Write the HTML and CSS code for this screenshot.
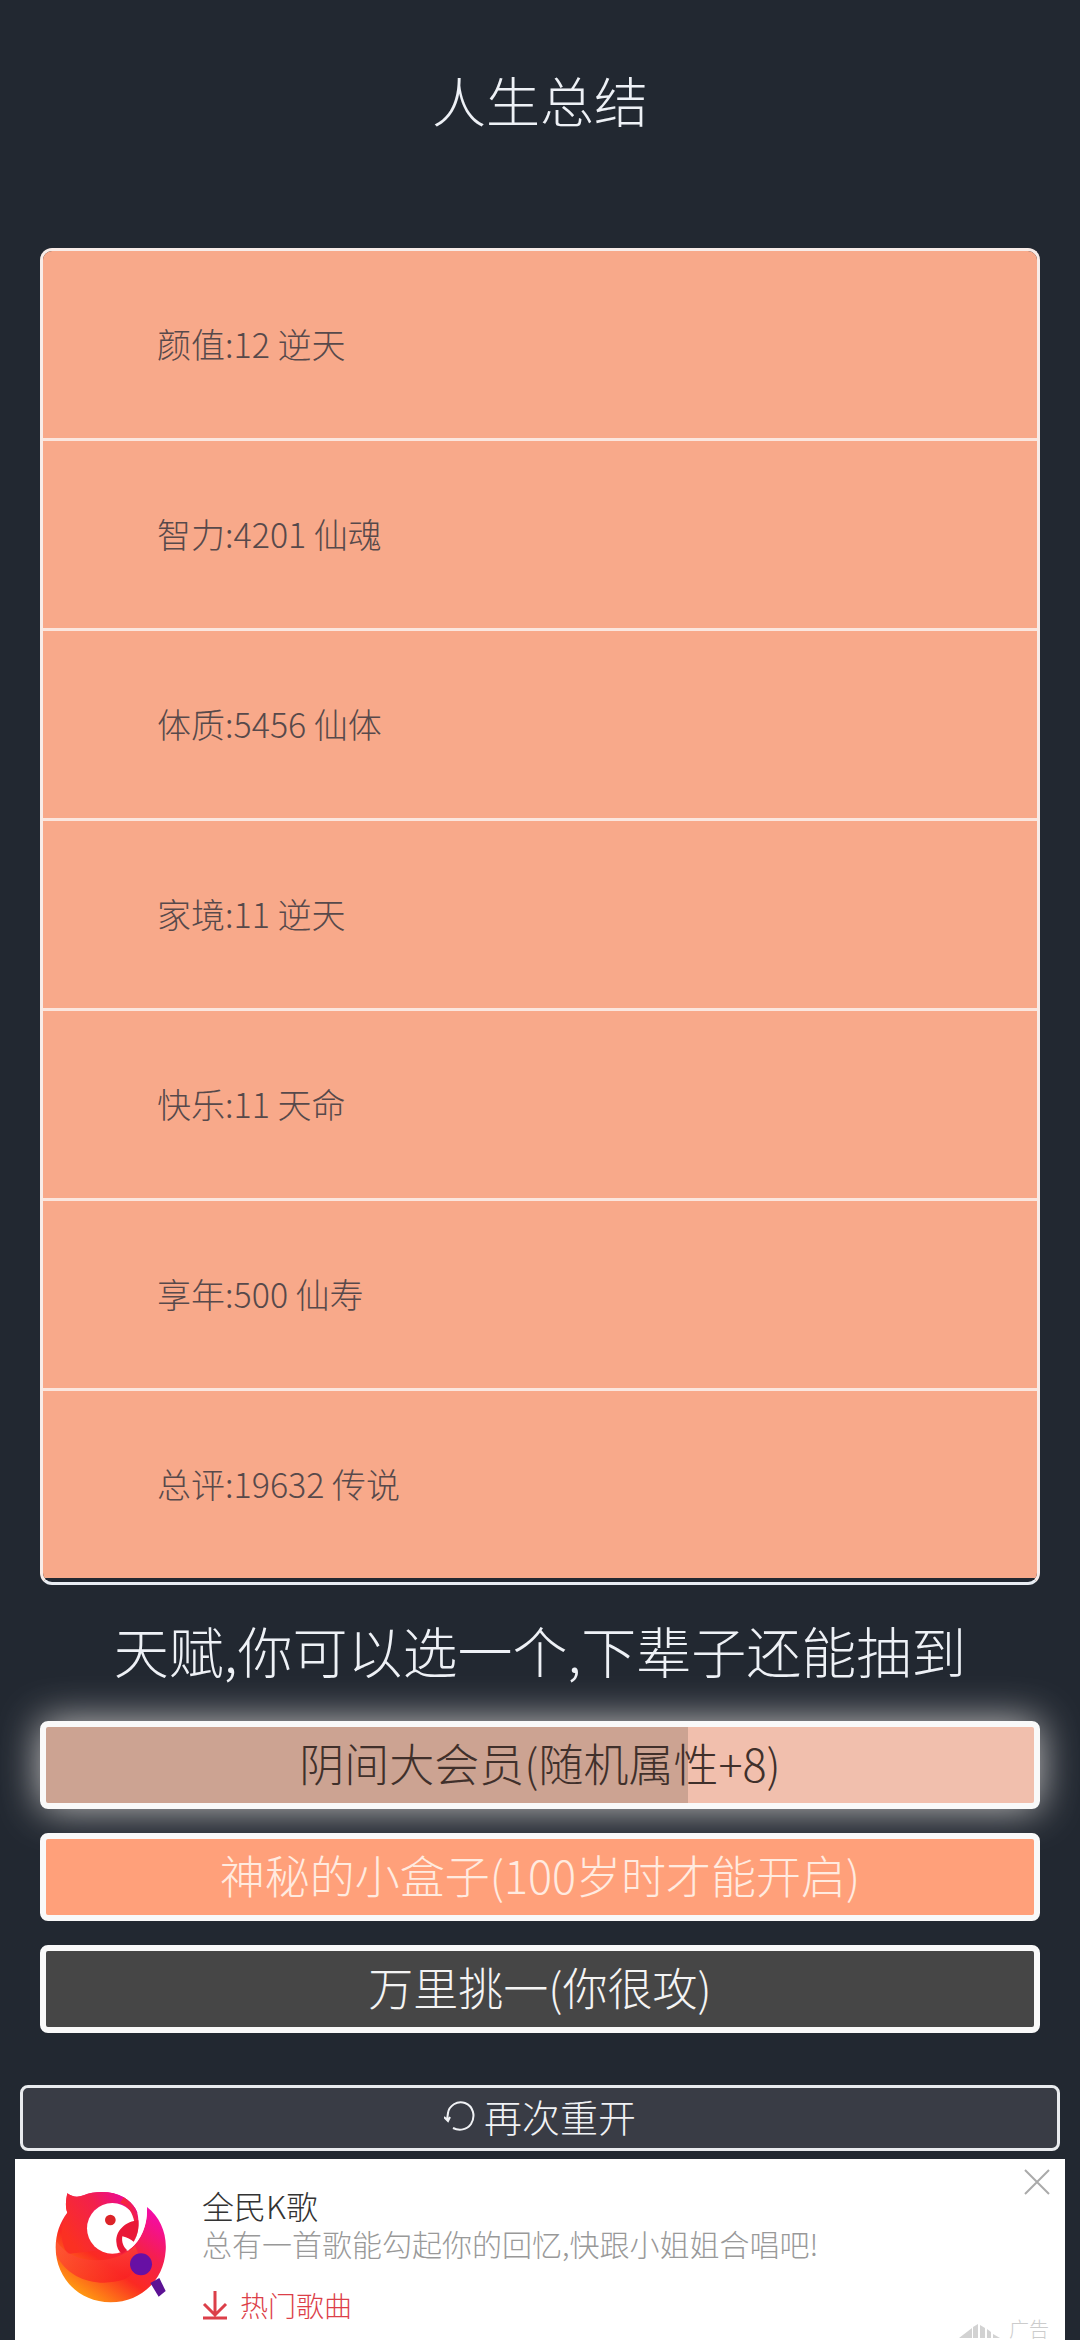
FILE: index.html
```html
<!DOCTYPE html>
<html lang="zh-CN">
<head>
<meta charset="utf-8">
<meta name="viewport" content="width=device-width, initial-scale=1">
<title>人生总结</title>
<link rel="stylesheet" href="styles.css">
</head>
<body>
<main class="page">
  <h1 class="title">人生总结</h1>

  <ul class="summary">
    <li>颜值:12 逆天</li>
    <li>智力:4201 仙魂</li>
    <li>体质:5456 仙体</li>
    <li>家境:11 逆天</li>
    <li>快乐:11 天命</li>
    <li>享年:500 仙寿</li>
    <li>总评:19632 传说</li>
  </ul>

  <h2 class="prompt">天赋,你可以选一个,下辈子还能抽到</h2>

  <div class="talents">
    <button class="talent selected" type="button">阴间大会员(随机属性+8)</button>
    <button class="talent rare" type="button">神秘的小盒子(100岁时才能开启)</button>
    <button class="talent common" type="button">万里挑一(你很攻)</button>
  </div>

  <button class="restart" type="button">
    <svg class="restart-icon" viewBox="0 0 32 32" aria-hidden="true"><path d="M9 28C15 31 23 30 27 24C32 16 29 6 21 3C13 0 5 6 4 13L3 20M0 17L4 21L6 17"/></svg>
    <span>再次重开</span>
  </button>

  <section class="ad">
    <svg class="ad-logo" viewBox="160 155 345 345" role="img" aria-label="全民K歌">
      <defs>
        <linearGradient id="body" x1="0.85" y1="0.1" x2="0.25" y2="0.95">
          <stop offset="0" stop-color="#f408b4"/>
          <stop offset="0.38" stop-color="#f5204a"/>
          <stop offset="0.65" stop-color="#fb2a22"/>
          <stop offset="1" stop-color="#ff9a12"/>
        </linearGradient>
        <linearGradient id="head" x1="1" y1="0" x2="0" y2="0.6">
          <stop offset="0" stop-color="#e800b8"/>
          <stop offset="0.5" stop-color="#f2204c"/>
          <stop offset="1" stop-color="#fb3022"/>
        </linearGradient>
        <linearGradient id="shade" x1="0.2" y1="0" x2="0.6" y2="1">
          <stop offset="0" stop-color="#ff5a3c"/>
          <stop offset="1" stop-color="#f91f22"/>
        </linearGradient>
      </defs>
      <path fill="url(#body)" d="M203 168C218 179 234 181 252 174C288 159 340 161 372 180C409 202 424 240 416 282C410 305 402 321 392 334C427 307 444 260 442 209C482 240 502 289 498 340C492 430 424 494 333 495C235 494 168 420 168 330C168 290 181 254 203 226C196 207 199 188 203 168Z"/>
      <path fill="url(#head)" d="M203 168C218 179 234 181 252 174C288 159 340 161 372 180C403 199 420 228 417 252L385 250C366 210 317 188 280 217C249 244 258 313 302 338L205 350C178 315 183 260 203 226C196 207 199 188 203 168Z"/>
      <path fill="url(#shade)" opacity=".7" d="M170 310C207 371 297 382 360 355C380 347 395 338 406 326C425 360 420 402 375 426C299 451 207 430 170 352Z"/>
      <circle cx="338" cy="273" r="76" fill="#fff"/>
      <path fill="url(#head)" d="M372 180C403 199 420 228 417 256L404 254C399 225 385 205 362 196Z"/>
      <path fill="#fff" d="M442 205C444 260 427 307 385 340L365 335L402 313C415 293 421 262 413 226C425 226 438 217 442 205Z"/>
      <path fill="#e91837" d="M416 249C380 251 348 279 350 313C351 330 357 342 367 349L382 338C372 330 365 315 368 297C383 300 393 306 402 313C415 293 418 271 416 249Z"/>
      <circle cx="332" cy="248" r="16" fill="#dc2328"/>
      <circle cx="424" cy="381" r="33" fill="#6710a4"/>
      <path fill="#5c1294" d="M452 437L479 422L498 461L477 478Z"/>
    </svg>
    <div class="ad-text">
      <h3 class="ad-title">全民K歌</h3>
      <p class="ad-desc">总有一首歌能勾起你的回忆,快跟小姐姐合唱吧!</p>
      <a class="ad-link" href="#">
        <svg class="download-icon" viewBox="0 0 26 30" aria-hidden="true"><path d="M13 1V24M2 14L13 25L24 14M1 28H25"/></svg>
        <span>热门歌曲</span>
      </a>
    </div>
    <button class="ad-close" type="button" aria-label="关闭">
      <svg viewBox="0 0 26 26" aria-hidden="true"><path d="M1 1L25 25M25 1L1 25"/></svg>
    </button>
    <div class="ad-mark">
      <svg viewBox="0 0 42 16" aria-hidden="true"><path d="M0 14L13 4V14ZM14 3L19 0V14H14ZM21 1L26 4V14H21ZM28 5L32 8V14H28ZM34 10L41 14H34Z"/></svg>
      <span>广告</span>
    </div>
  </section>
</main>
</body>
</html>
```

FILE: styles.css
```css
* {
  box-sizing: border-box;
}

body {
  margin: 0;
  background: #222831;
  color: #eef1f6;
  font-family: "Noto Sans CJK SC", sans-serif;
  font-weight: 300;
}

h1, h2, h3, p, ul {
  margin: 0;
  padding: 0;
  font-weight: inherit;
}

button {
  font: inherit;
  cursor: pointer;
}

.page {
  display: flex;
  flex-direction: column;
  min-height: 100vh;
  overflow: hidden;
}

.title {
  padding: 60px 0 108px;
  font-size: 54px;
  line-height: 80px;
  text-align: center;
}

.summary {
  margin: 0 40px;
  padding-bottom: 4px;
  border: 3px solid #f8ece8;
  border-bottom-color: #e9edf3;
  border-radius: 12px;
  overflow: hidden;
  list-style: none;
  font-size: 34px;
  line-height: 50px;
  color: #57494b;
}

.summary li {
  padding: 68px 114px 69px;
  background: #f8a98a;
}

.summary li + li {
  border-top: 3px solid #fbe6de;
}

.prompt {
  padding: 24px 0 32px;
  font-size: 55px;
  line-height: 80px;
  text-align: center;
  white-space: nowrap;
}

.talents {
  display: flex;
  flex-direction: column;
  gap: 24px;
  margin: 0 40px;
}

.talent {
  padding: 4px 6px 8px;
  border: 6px solid #f9f9f9;
  border-radius: 8px;
  font-size: 45px;
  line-height: 64px;
  white-space: nowrap;
}

.selected {
  background: linear-gradient(90deg, #cca392 65%, #f1bfad 65%);
  color: #40302b;
  box-shadow: 0 0 40px rgba(255, 250, 245, 0.75);
}

.rare {
  background: #ffa07a;
  color: #ffebe0;
}

.common {
  background: #464646;
  color: #f4f4f4;
}

.restart {
  display: flex;
  align-items: center;
  justify-content: center;
  gap: 8px;
  margin: 52px 20px 8px;
  padding: 4px 6px 8px;
  border: 3px solid #e9ebee;
  border-radius: 8px;
  background: #393c45;
  color: #f0f2f5;
  font-size: 38px;
  line-height: 48px;
}

.restart-icon {
  width: 32px;
  height: 32px;
  fill: none;
  stroke: currentColor;
  stroke-width: 2;
}

.ad {
  position: relative;
  display: flex;
  flex: 1;
  gap: 34px;
  margin: 0 15px;
  padding: 24px 38px 0;
  background: #fff;
}

.ad-logo {
  width: 115px;
  height: 115px;
  margin-top: 6px;
}

.ad-title {
  font-size: 32px;
  line-height: 44px;
  color: #333;
}

.ad-desc {
  font-size: 30px;
  line-height: 32px;
  color: #999;
}

.ad-text {
  white-space: nowrap;
}

.ad-link {
  display: flex;
  align-items: center;
  gap: 12px;
  padding-top: 28px;
  color: #dc3f49;
  font-size: 28px;
  line-height: 36px;
  text-decoration: none;
}

.download-icon {
  width: 26px;
  height: 30px;
  fill: none;
  stroke: currentColor;
  stroke-width: 3;
}

.ad-close {
  position: absolute;
  top: 10px;
  right: 15px;
  width: 26px;
  height: 26px;
  padding: 0;
  border: 0;
  background: none;
}

.ad-close svg {
  display: block;
  fill: none;
  stroke: #aaa;
  stroke-width: 2;
}

.ad-mark {
  position: absolute;
  right: 16px;
  bottom: 0;
  display: flex;
  align-items: flex-end;
  gap: 8px;
  color: #ccc;
  font-size: 20px;
  line-height: 22px;
}

.ad-mark svg {
  width: 42px;
  height: 16px;
  fill: #d2d2d2;
}
```
